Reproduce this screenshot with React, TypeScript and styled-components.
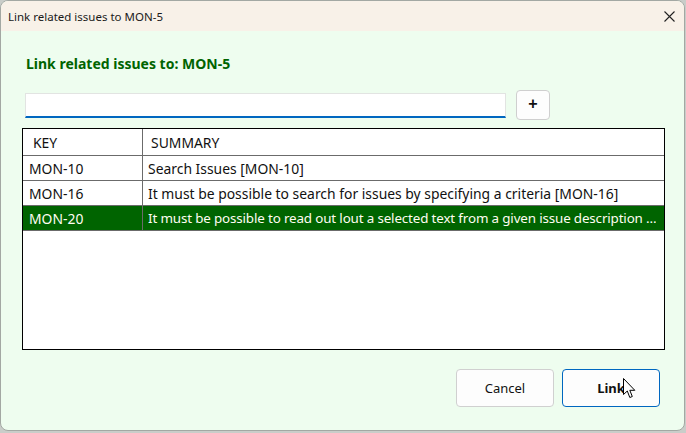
import React from "react";
import styled, { createGlobalStyle } from "styled-components";

const Global = createGlobalStyle`
  html, body { margin: 0; padding: 0; }
  body {
    background: #c9cdc9;
    font-family: "Noto Sans", "Segoe UI", sans-serif;
    width: 686px;
    height: 433px;
    overflow: hidden;
  }
`;

const Window = styled.div`
  position: relative;
  box-sizing: border-box;
  width: 685px;
  height: 431px;
  border: 1px solid #a3a8a3;
  border-radius: 8px;
  overflow: hidden;
  display: flex;
  flex-direction: column;
  background: #eefdef;
`;

const TitleBar = styled.div`
  height: 30px;
  flex: none;
  background: #f8f1e8;
  display: flex;
  align-items: center;
  justify-content: space-between;
  padding: 0 9px 0 7px;
`;

const TitleText = styled.span`
  font-size: 11.5px;
  color: #1a1a1a;
`;

const CloseButton = styled.div`
  width: 12px;
  height: 12px;
  display: flex;
  align-items: center;
  justify-content: center;
`;

const Body = styled.div`
  flex: 1;
  display: flex;
  flex-direction: column;
  padding: 0 19px 0 21px;
`;

const Heading = styled.h1`
  margin: 24px 0 0 4px;
  font-size: 14px;
  font-weight: 700;
  color: #006400;
  line-height: 18px;
`;

const SearchRow = styled.div`
  display: flex;
  align-items: center;
  gap: 10px;
  margin: 17px 0 0 3px;
`;

const SearchInput = styled.input`
  box-sizing: border-box;
  width: 481px;
  height: 25px;
  border: 1px solid #e2e4e2;
  border-bottom: 2px solid #0067c0;
  background: #fff;
  outline: none;
  font: inherit;
  font-size: 13.6px;
  padding: 0 6px;
`;

const PlusButton = styled.button`
  box-sizing: border-box;
  width: 34px;
  height: 30px;
  background: #fdfdfd;
  border: 1px solid #cfcfcf;
  border-radius: 4px;
  font-size: 16px;
  font-weight: 700;
  color: #111;
  display: flex;
  align-items: center;
  justify-content: center;
  padding: 0 0 2px 0;
  font-family: "Liberation Sans", sans-serif;
`;

const Table = styled.div`
  box-sizing: border-box;
  margin-top: 8px;
  width: 643px;
  height: 222px;
  border: 1px solid #000;
  background: #fff;
  display: flex;
  flex-direction: column;
`;

const Row = styled.div<{ $header?: boolean; $selected?: boolean }>`
  display: grid;
  grid-template-columns: 120px 1fr;
  height: ${(p) => (p.$header ? 26 : 24)}px;
  border-bottom: 1px solid #6b6b6b;
  background: ${(p) => (p.$selected ? "#006400" : "#fff")};
  color: ${(p) => (p.$selected ? "#fffdf2" : "#111")};
  font-size: 13.9px;
`;

const Cell = styled.div<{ $header?: boolean; $first?: boolean }>`
  display: flex;
  align-items: center;
  padding-left: ${(p) => (p.$header ? (p.$first ? 10 : 8) : p.$first ? 6 : 5)}px;
  padding-right: 2px;
  border-right: ${(p) => (p.$first ? "1px solid #6b6b6b" : "none")};
  white-space: nowrap;
  overflow: hidden;
  min-width: 0;
`;

const CellText = styled.span<{ $compact?: boolean }>`
  overflow: hidden;
  text-overflow: ellipsis;
  white-space: nowrap;
  font-size: ${(p) => (p.$compact ? "13.4px" : "inherit")};
  letter-spacing: ${(p) => (p.$compact ? "-0.15px" : "normal")};
`;

const Footer = styled.div`
  display: flex;
  justify-content: flex-end;
  gap: 8px;
  margin-top: 19px;
  padding-right: 5px;
`;

const DialogButton = styled.button<{ $primary?: boolean }>`
  box-sizing: border-box;
  width: 98px;
  height: 38px;
  background: #fdfdfd;
  border: 1px solid ${(p) => (p.$primary ? "#0067c0" : "#d0d0d0")};
  border-radius: 4px;
  font-family: "Noto Sans", "Segoe UI", sans-serif;
  font-size: 13px;
  font-weight: ${(p) => (p.$primary ? 700 : 400)};
  color: #111;
`;

const Cursor = styled.svg`
  position: absolute;
  left: 622px;
  top: 377px;
`;

const rows = [
  { key: "MON-10", summary: "Search Issues [MON-10]" },
  { key: "MON-16", summary: "It must be possible to search for issues by specifying a criteria [MON-16]" },
  {
    key: "MON-20",
    summary: "It must be possible to read out lout a selected text from a given issue description ...",
    selected: true,
    compact: true,
  },
];

export default function App() {
  return (
    <>
      <Global />
      <Window>
        <TitleBar>
          <TitleText>Link related issues to MON-5</TitleText>
          <CloseButton>
            <svg width="11" height="11" viewBox="0 0 11 11">
              <path d="M0.5 0.5 L10.5 10.5 M10.5 0.5 L0.5 10.5" stroke="#222" strokeWidth="1.1" fill="none" />
            </svg>
          </CloseButton>
        </TitleBar>
        <Body>
          <Heading>Link related issues to: MON-5</Heading>
          <SearchRow>
            <SearchInput />
            <PlusButton>+</PlusButton>
          </SearchRow>
          <Table>
            <Row $header>
              <Cell $header $first>KEY</Cell>
              <Cell $header>SUMMARY</Cell>
            </Row>
            {rows.map((r) => (
              <Row key={r.key} $selected={r.selected}>
                <Cell $first>{r.key}</Cell>
                <Cell>
                  <CellText $compact={r.compact}>{r.summary}</CellText>
                </Cell>
              </Row>
            ))}
          </Table>
          <Footer>
            <DialogButton>Cancel</DialogButton>
            <DialogButton $primary>Link</DialogButton>
          </Footer>
        </Body>
        <Cursor width="14" height="22" viewBox="0 0 14 22">
          <path d="M0.5 0.5 L0.5 16.5 L4.3 13 L6.8 19.5 L9.3 18.5 L6.8 12.3 L11.8 12.3 Z" fill="#fff" stroke="#000" strokeWidth="1" strokeLinejoin="round" />
        </Cursor>
      </Window>
    </>
  );
}
